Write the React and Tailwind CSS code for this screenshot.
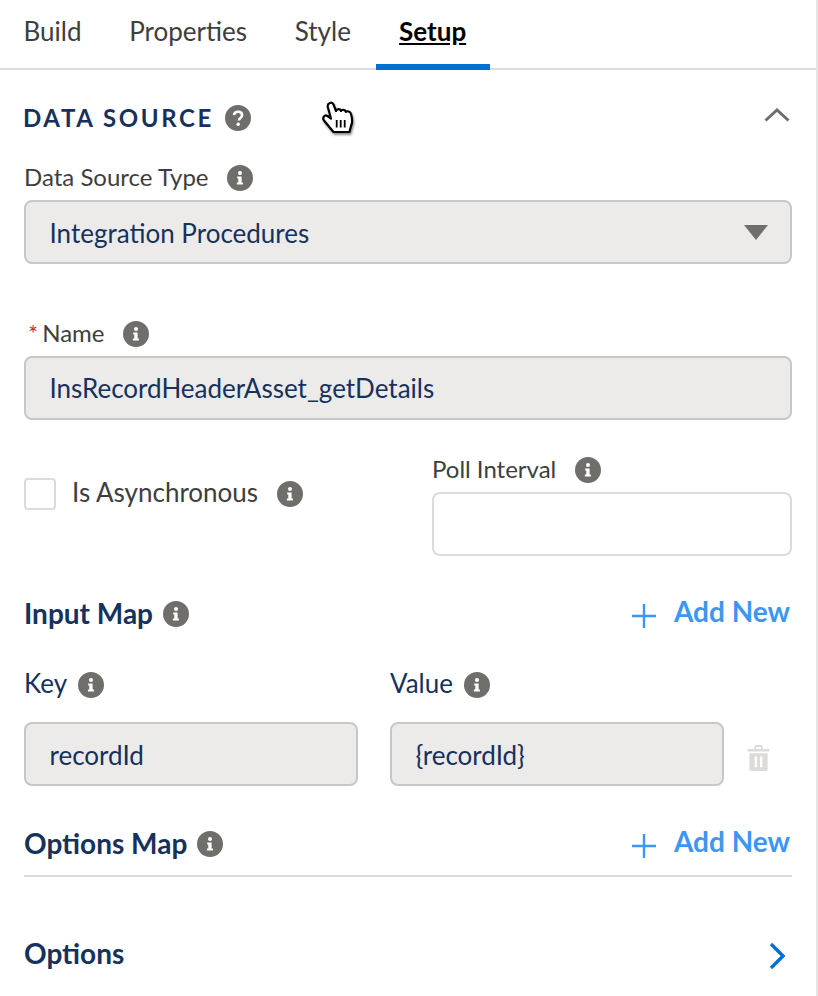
const lato = "font-['Lato','Open_Sans',sans-serif]";

const InfoIcon = ({ className = '' }) => (
    <svg width="26" height="26" viewBox="0 0 26 26" className={`shrink-0 ${className}`}>
        <circle cx="13" cy="13" r="13" fill="#706e6b" />
        <circle cx="13" cy="8" r="2" fill="#fff" />
        <path d="M10.2 11.4h4.4v6.2h1.3v2h-6v-2h1.4v-4.2h-1.1z" fill="#fff" />
    </svg>
);

const HelpIcon = () => (
    <svg width="26" height="26" viewBox="0 0 26 26" className="shrink-0">
        <circle cx="13" cy="13" r="13" fill="#706e6b" />
        <path d="M9 10.2c.2-2.2 1.8-3.4 4.1-3.4 2.4 0 4 1.3 4 3.3 0 1.500-.8 2.300-1.900 3.100-1 .7-1.300 1.100-1.300 2.300" fill="none" stroke="#fff" strokeWidth="2.600" />
        <circle cx="13.200" cy="19.300" r="1.800" fill="#fff" />
    </svg>
);

const PlusIcon = () => (
    <svg width="24" height="24" viewBox="0 0 24 24" className="shrink-0 mt-[3px]">
        <path d="M12 0v24M0 12h24" stroke="#3b97f2" strokeWidth="2.400" />
    </svg>
);

const TrashIcon = () => (
    <svg width="23" height="27" viewBox="0 0 24 28" className="shrink-0">
        <path d="M8.500 4V2.500c0-.8.700-1.500 1.500-1.500h4c.8 0 1.500.7 1.500 1.500V4" fill="none" stroke="#dddbda" strokeWidth="2" />
        <rect x="0.500" y="4" width="23" height="2.600" rx="1" fill="#dddbda" />
        <path fillRule="evenodd" d="M2.500 8.500h19V25.500a1.500 1.500 0 0 1-1.500 1.500H4a1.500 1.500 0 0 1-1.500-1.500zM8 12v11h2.500V12zM13.500 12v11H16V12z" fill="#dddbda" />
    </svg>
);

const HandCursor = () => (
    <svg width="36" height="38" viewBox="0 0 36 38" className="absolute left-[321px] top-[101px] drop-shadow-[1px_2px_1px_rgba(0,0,0,0.45)]">
        <path d="M12.500 31 3 19.500C1 17 3.500 13 6.500 15L10 17.500 6.800 6C6 2 11 0 12.500 3.500L15 10C16 7.500 19.500 7.500 20 10 21 8 24.500 8.500 25 11 26 9.500 29.500 10.500 30 13 31.500 18 31.500 22 30 25L28.500 31Z" fill="#fff" stroke="#000" strokeWidth="2.200" strokeLinejoin="round" />
        <path d="M15.700 19v7.500M19.700 19v7.500M23.700 19v7.500" stroke="#000" strokeWidth="1.800" />
    </svg>
);

const FieldBox = ({ children, className = '' }) => (
    <div className={`h-16 flex items-center pl-[23.5px] pr-6 bg-[#ecebea] border-2 border-[#c9c7c5] rounded-lg text-[26px] text-[#16325c] ${className}`}>
        {children}
    </div>
);

const Label = ({ children, gap = 'gap-[19px]', className = '' }) => (
    <div className={`h-7 flex items-center ${gap} text-[24px] leading-7 text-[#3e3e3c] ${className}`}>
        <span className="-mt-[2px]">{children}</span>
        <InfoIcon />
    </div>
);

const KeyLabel = ({ children }) => (
    <div className="h-7 flex items-center gap-[11px] text-[26px] leading-7 text-[#16325c]">
        <span className="-mt-[2px]">{children}</span>
        <InfoIcon className="mt-[2px]" />
    </div>
);

const SectionRow = ({ title, className = '' }) => (
    <div className={`h-8 flex items-center justify-between ${className}`}>
        <div className="flex items-center gap-[10px]">
            <span className="text-[28px] font-bold text-[#16325c] -mt-[2px]">{title}</span>
            <InfoIcon />
        </div>
        <div className="flex items-center gap-[18px] pr-[2px] text-[28px] font-bold text-[#3b97f2]">
            <PlusIcon />
            <span className="-mt-[6px]">Add New</span>
        </div>
    </div>
);

export default function App() {
    const tabs = ['Build', 'Properties', 'Style'];

    return (
        <div className={`relative w-[818px] h-[996px] overflow-hidden bg-white border-r-2 border-[#e5e5e5] ${lato}`}>
            <div className="h-[70px] flex border-b-2 border-[#dddbda] pl-[23.5px] pr-6 gap-[47.75px] text-[26px] text-[#3e3e3c]">
                {tabs.map((t) => (
                    <div key={t} className="pt-[12px] leading-[38px]">{t}</div>
                ))}
                <div className="relative -ml-[23px] w-[114px] text-center pt-[12px] leading-[38px] font-bold text-black underline border-b-[6px] border-[#0070d2] h-[70px]">
                    Setup
                </div>
            </div>

            <div className="px-6">
                <div className="mt-8 h-8 flex items-center justify-between">
                    <div className="flex items-center gap-[11px] -ml-px">
                        <span className="text-[24px] font-bold tracking-[2.600px] text-[#16325c]">DATA SOURCE</span>
                        <HelpIcon />
                    </div>
                    <svg width="26" height="14" viewBox="0 0 26 14" className="mr-[2px] -mt-[6px]">
                        <path d="M1.500 12.500 13 2l11.500 10.500" fill="none" stroke="#706e6b" strokeWidth="3" />
                    </svg>
                </div>

                <Label gap="gap-[18px]" className="mt-[30px]">Data Source Type</Label>
                <FieldBox className="mt-2 justify-between">
                    <span className="mt-[2px]">Integration Procedures</span>
                    <svg width="24" height="15" viewBox="0 0 24 15" className="-mr-[2px]">
                        <path d="M0 0h24L12 15z" fill="#706e6b" />
                    </svg>
                </FieldBox>

                <Label gap="gap-[18px]" className="mt-14">
                    <span className="pl-[4px]">
                        <span className="text-[#c23934] text-[24px] pr-[4px]">*</span>Name
                    </span>
                </Label>
                <FieldBox className="mt-2">InsRecordHeaderAsset_getDetails</FieldBox>

                <div className="mt-9 grid grid-cols-[408px_1fr]">
                    <div className="flex items-center h-16 mt-[6px]">
                        <div className="w-8 h-8 border-2 border-[#dddbda] rounded-[4px] bg-white mr-4" />
                        <div className="flex items-center gap-[19px] text-[26px] text-[#3e3e3c]">
                            <span className="-mt-[3px]">Is Asynchronous</span>
                            <InfoIcon />
                        </div>
                    </div>
                    <div>
                        <Label>Poll Interval</Label>
                        <div className="mt-2 h-16 bg-white border-2 border-[#dddbda] rounded-lg" />
                    </div>
                </div>

                <SectionRow title="Input Map" className="mt-[42px]" />

                <div className="mt-10 grid grid-cols-[334px_334px_1fr] gap-x-8">
                    <KeyLabel>Key</KeyLabel>
                    <KeyLabel>Value</KeyLabel>
                    <div />
                    <FieldBox className="mt-6"><span className="mt-[2px]">recordId</span></FieldBox>
                    <FieldBox className="mt-6"><span className="mt-[2px]">{'{recordId}'}</span></FieldBox>
                    <div className="mt-6 pt-[8px] flex items-center -ml-[9px]">
                        <TrashIcon />
                    </div>
                </div>

                <SectionRow title="Options Map" className="mt-[42px]" />
                <div className="mt-[15px] h-[2px] bg-[#dddbda]" />

                <div className="mt-[61px] h-8 flex items-center justify-between">
                    <span className="text-[28px] font-bold text-[#16325c] -mt-[2px]">Options</span>
                    <svg width="16" height="28" viewBox="0 0 16 28" className="mr-[7px] mt-[4px]">
                        <path d="M2 2l12 12L2 26" fill="none" stroke="#0070d2" strokeWidth="3.400" />
                    </svg>
                </div>
            </div>

            <HandCursor />
        </div>
    );
}
